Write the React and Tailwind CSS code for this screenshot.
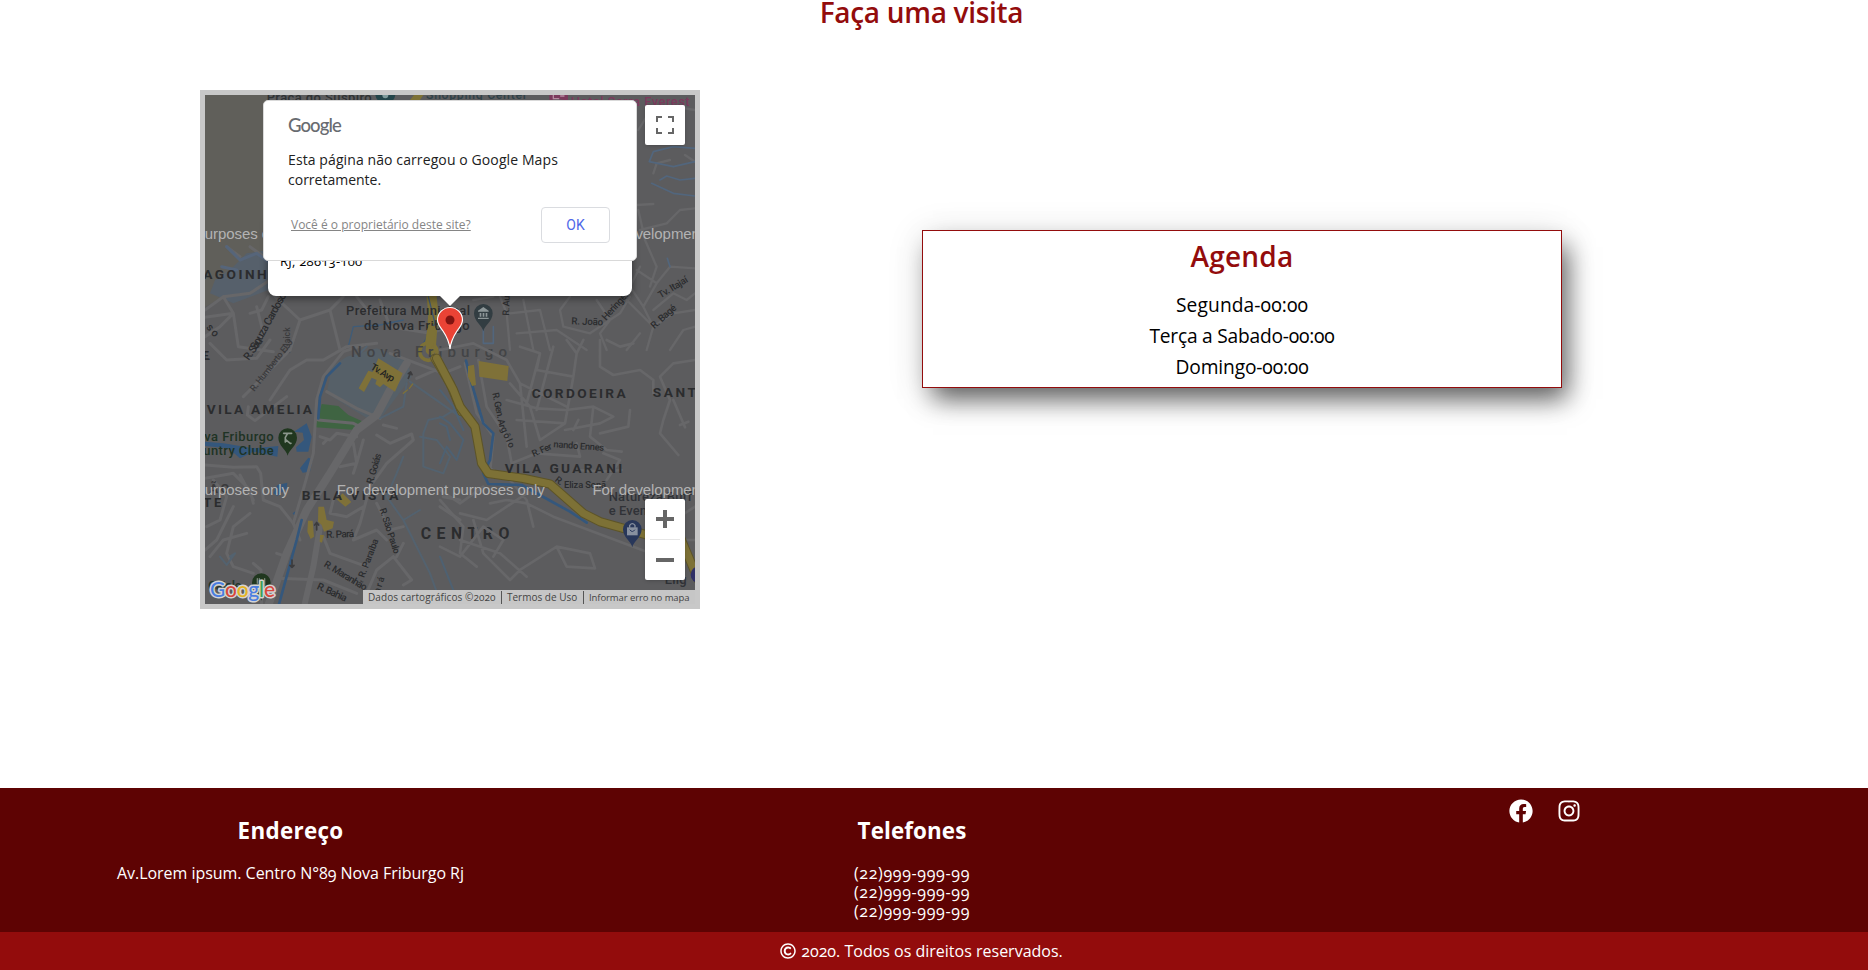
import { FaFacebook, FaInstagram, FaRegCopyright } from "react-icons/fa";

const Label = ({ x, y, w, size = 36, fill = "#2b2c2e", weight = 500, rot = 0, children }) => (
  <text
    x={x - 2}
    y={y - 1}
    textLength={w}
    fontSize={size * 1.08}
    fill={fill}
    fontWeight={weight}
    transform={rot ? `rotate(${rot} ${x} ${y})` : undefined}
  >
    {children}
  </text>
);

const Watermark = ({ x, y }) => (
  <text x={x} y={y} textLength="208" fontSize="15" fill="#b3b3b3" className="font-['Liberation_Sans',sans-serif]">
    For development purposes only
  </text>
);

const Pin = ({ x, y, fill }) => (
  <path
    transform={`translate(${x} ${y})`}
    d="M0 54C-4 36-28 24-28 0a28 28 0 0 1 56 0C28 24 4 36 0 54Z"
    fill={fill}
  />
);

function MapCanvas() {
  return (
    <svg viewBox="0 0 490 509" className="block h-[509px] w-[490px] font-['Roboto',sans-serif]">
      <rect width="490" height="509" fill="#5c5c5e" />

      {/* north-west */}
      <g transform="translate(-15 -15) scale(.33333)" fill="none" stroke="#676769" strokeWidth="9" strokeLinejoin="round" strokeLinecap="round">
        <path d="M45 45H235V500L190 560L120 640L45 680Z" fill="#605f5a" stroke="none" />
        <path d="M235 510L170 520L130 560L75 600L60 640L130 670L235 630Z" fill="#56606b" stroke="none" />
        <path d="M45 690L100 650L130 700L45 712M100 650L180 640L240 600M110 500L150 530M180 500L235 540M130 700L145 800L250 815M45 770L90 740L130 700M200 680L220 760L190 810M235 650L215 690L180 700" />
        <path d="M110 500L150 540L200 520L235 545M95 560L140 570" stroke="#56657a" />
        <path d="M255 650L330 720L420 690L460 650M330 720L300 810M420 690L450 810M570 660L600 740L720 760L810 730M500 650L540 700L590 690" />
        <path d="M725 650L730 700L722 810" stroke="#7d7136" strokeWidth="30" />
        <path d="M715 650L735 730L700 790" stroke="#3f566e" strokeWidth="4" />
        <path d="M475 800L490 740L570 735L640 720" stroke="#3f5c78" strokeWidth="4" />
        <g stroke="none">
          <Label x="232" y="68" w="315" size="36" fill="#2f3234">Praça do Suspiro</Label>
          <circle cx="586" cy="42" r="30" fill="#24454a" />
          <circle cx="586" cy="46" r="9" fill="#7e9a9b" />
          <path d="M660 60L672 45H700L690 60Z" fill="#7d7136" />
          <Label x="42" y="597" w="190" size="38" weight="700">AGOINH</Label>
          <Label x="200" y="810" w="190" size="30" rot="-61">Souza Cardoso</Label>
          <Label x="302" y="820" w="80" size="24" rot="-90" fill="#3a3a3c">t-Jaick</Label>
          <Label x="48" y="745" w="40" size="30" rot="50">so</Label>
          <Label x="470" y="707" w="372" size="36">Prefeitura Municipal</Label>
          <Label x="524" y="750" w="317" size="36">de Nova Friburgo</Label>
        </g>
      </g>

      {/* north-east */}
      <g transform="translate(235 -15) scale(.33333)" fill="none" stroke="#676769" strokeWidth="7" strokeLinejoin="round" strokeLinecap="round">
        <path d="M595 150L620 110L700 80L765 90M590 375L640 372M600 450L680 430L720 390L765 385M595 390L615 480L650 560L630 620M735 225L765 245M640 280L650 250L690 240M590 570L650 610L690 560L765 565M470 660L510 720L480 760L500 810M560 660L640 740L700 700L765 690M650 610L610 680L640 740L620 810M600 560L570 620L610 680M640 690L700 640L740 660L765 640M390 650L360 690L370 740L450 760L540 700L570 650M690 810L730 750L765 740M560 810L600 760M250 660L280 810M180 650L200 700L210 810M100 660L160 650M210 700L300 690L330 810M230 760L350 750L440 810" />
        <path d="M765 205L700 200L640 215L628 245L700 260L765 245M635 310L700 340L765 348M660 300L680 288L720 300L765 295M682 535L690 560M130 740V790H160V740" stroke="#52667d" strokeWidth="5" />
        <g stroke="none">
          <Label x="-40" y="57" w="303" size="34" fill="#2f4148">Shopping Center</Label>
          <path d="M328 45H384V66Q356 50 328 62Z" fill="#7b3a5c" />
          <path d="M340 45V56H356M362 48H372" stroke="#b58aa0" strokeWidth="4" />
          <Label x="394" y="80" w="357" size="36" fill="#7b3a5c">Hotel Serra Everest</Label>
          <Label x="208" y="705" w="60" size="26" rot="-88">R. Au</Label>
          <Label x="396" y="734" w="95" size="27" rot="2">R. João</Label>
          <Label x="500" y="722" w="105" size="27" rot="-48">Heringer</Label>
          <Label x="664" y="655" w="98" size="27" rot="-31">Tv. Itajaí</Label>
          <Label x="645" y="747" w="92" size="27" rot="-42">R. Bagé</Label>
          <Pin x="130" y="700" fill="#323d42" />
          <path d="M114 692L130 681L146 692V695H114ZM119 699H124V710H119ZM128 699H133V710H128ZM137 699H142V710H137ZM114 713H146V717H114Z" fill="#8d9698" />
        </g>
      </g>

      {/* south-west */}
      <g transform="translate(-15 245) scale(.33333)" fill="none" stroke="#676769" strokeWidth="9" strokeLinejoin="round" strokeLinecap="round">
        <path d="M425 80L470 50L560 25L650 60L665 110L575 230L540 240L410 160Z" fill="#566068" stroke="none" />
        <path d="M395 192L445 198L475 225L520 245L500 270L375 262Z" fill="#3f6442" stroke="none" />
        <path d="M45 305L100 310L150 318L190 325L265 318L262 350L190 335L150 355L115 325L45 318ZM312 275L350 250L365 290L355 335L320 335L318 322L342 300L338 278ZM330 385L355 353L368 358L360 395L338 398ZM250 460L262 435L292 428L290 445L262 468ZM308 520L318 512L314 528Z" fill="#34577c" stroke="none" />
        <path d="M60 10L110 60L200 55L240 0M160 170L300 30M240 180L300 90L350 60L400 60L470 20L560 10M175 200L172 225L195 242L250 200L290 170M45 375L130 382L200 380L212 400L220 480L270 500L310 550L330 600M45 415L130 400L180 450L190 490M150 405L190 480M70 420L110 470L90 540L50 560M130 500L80 600L45 630M180 520L130 560L110 640L130 680L190 700M60 650L100 600L170 580" />
        <path d="M520 15L460 35L400 110L380 180L370 340L345 430M410 155L500 205L570 235M385 240L490 250L510 260M390 290L420 300L440 280L500 290M345 430L310 550M400 310L410 300M490 310L500 370L450 380M560 285L600 310L665 282L670 300L590 370L540 440L510 550L490 600M520 300L500 370L490 400M430 480L420 520L470 530L520 500M400 590L420 640L530 680M260 715L400 720L500 760M215 800L213 690L190 670M260 640L290 650M560 490L600 570L640 560M490 600L560 570L590 600M610 650L665 720L640 735M610 650L560 690L530 760M620 650L640 610M600 40L760 100L810 80M680 115L760 80M750 500L810 540M760 470L810 480M580 255L620 265" />
        <path d="M650 70L600 150L560 225L500 270L420 400L350 510L290 640L230 810" strokeWidth="24" />
        <path d="M390 560L370 680L340 810" strokeWidth="18" />
        <path d="M450 70L410 110L390 170L385 235M335 540L320 600L265 800" stroke="#34577c" strokeWidth="8" />
        <path d="M650 130L640 200L570 235M660 125L810 230M700 280L715 240L760 230L810 200M690 290L740 300L780 350L760 400L700 380L700 280M640 350L620 400L590 470L640 540L720 700L760 810M690 510L640 540M500 50L530 20M90 650L110 675L135 640L120 650" stroke="#53626f" strokeWidth="6" />
        <path d="M565 55L638 100L628 125L615 155L580 132L570 142L556 132L560 120L545 113L522 156L506 145L535 92L548 96ZM440 478L458 460L484 486L466 500ZM385 500H402L410 540L432 545L428 565L402 575L395 555L384 545ZM354 542H368L372 590L362 597L352 575ZM390 585H402L396 608L389 605Z" fill="#7f7138" stroke="none" />
        <path d="M640 160L652 150M658 145L668 132" stroke="#7f7138" strokeWidth="4" />
        <circle cx="715" cy="35" r="26" stroke="#7d7136" strokeWidth="11" />
        <path d="M735 55L780 130L815 215" stroke="#5f562c" strokeWidth="28" />
        <path d="M735 55L780 130L815 215" stroke="#7d7136" strokeWidth="22" />
        <path d="M725 -30L718 10" stroke="#7d7136" strokeWidth="26" />
        <path d="M655 115L662 98M655 101L662 96L666 104M380 570V548M374 555L380 548L386 555M306 660V682M300 676L306 682L312 676" stroke="#3b3b3d" strokeWidth="5" />
        <g stroke="none">
          <Label x="485" y="53" w="468" size="42" fill="#434446">Nova Friburgo</Label>
          <Label x="541" y="88" w="78" size="27" rot="31" fill="#222">Tv. Avp</Label>
          <Label x="36" y="60" w="26" size="38" weight="700">EL</Label>
          <Label x="178" y="62" w="75" size="30" rot="-54">R. Sou</Label>
          <Label x="195" y="155" w="190" size="25" rot="-52" fill="#3a3a3c">R. Humberto El-J</Label>
          <Label x="52" y="224" w="316" size="38" weight="700">VILA AMELIA</Label>
          <Label x="45" y="304" w="208" size="36" fill="#1e3324">va Friburgo</Label>
          <Label x="42" y="346" w="211" size="36" fill="#1e3324">untry Clube</Label>
          <Pin x="293" y="293" fill="#20371f" />
          <path d="M281 280H305M293 280L286 292V306M286 298L298 308M300 310H303" fill="none" stroke="#8c978c" strokeWidth="5" />
          <Label x="60" y="460" w="60" size="36" weight="700" fill="#3a3a3c">ÃO</Label>
          <Label x="42" y="503" w="54" size="36" weight="700">TE</Label>
          <Label x="337" y="480" w="290" size="38" weight="700">BELA VISTA</Label>
          <Label x="550" y="432" w="94" size="27" rot="-74">R. Goiás</Label>
          <Label x="568" y="510" w="142" size="26" rot="72">R. São Paulo</Label>
          <Label x="411" y="595" w="84" size="28" rot="-2">R. Pará</Label>
          <Label x="524" y="713" w="122" size="26" rot="-69">R. Paraíba</Label>
          <Label x="401" y="680" w="145" size="27" rot="31">R. Maranhão</Label>
          <Label x="380" y="748" w="95" size="28" rot="24">R. Bahia</Label>
          <Label x="570" y="760" w="50" size="26" rot="-72">ará</Label>
          <Label x="694" y="597" w="266" size="44" weight="700">CENTRO</Label>
          <Label x="56" y="750" w="100" size="36" fill="#23352a">Cajole</Label>
          <Pin x="214" y="728" fill="#20371f" />
          <path d="M202 716V730M208 716V740M224 716V740" fill="none" stroke="#7c887e" strokeWidth="4" />
        </g>
      </g>

      {/* south-east */}
      <g transform="translate(235 245) scale(.33333)" fill="none" stroke="#676769" strokeWidth="8" strokeLinejoin="round" strokeLinecap="round">
        <path d="M0 30L100 10L200 60L240 130L380 200M75 70L110 220L160 290L150 400M115 60L140 200L200 290L215 370M240 20L300 40L290 90L400 110M300 40L260 190M340 20L290 210M380 0L410 40L400 110L375 250L300 300L270 200L210 130M410 40L430 0M200 180L290 205L375 210M230 240L375 250M240 130L260 320M480 0V80L520 105L600 90L640 120L640 160M500 0L540 20L580 10M765 60L700 70L660 110L690 180L670 240L660 280L715 345M700 180L735 262M720 255L745 245M380 210L460 200L520 230L480 250L375 270M460 200L450 290L500 330L545 335M570 210L565 260L480 280M400 270L415 240M215 370L290 340L420 350L410 310M410 390L490 395L545 390M490 340L540 360L500 420M150 385L210 420L260 480L280 560M150 490L200 480L260 490L340 530L420 560L620 635M0 450L60 490L130 440M0 480L70 560L60 640L110 680M60 520L140 540L260 460M100 540L130 640L210 720L240 690L350 620L450 640L465 685L380 680L350 620M0 620L60 650L130 560L190 600L160 650M60 600L180 640L260 710M620 600H765M640 580L765 500" />
        <path d="M0 230L30 250L70 300L50 360L20 320L0 370M0 150L40 200L70 270M0 250L20 260L30 300M0 650L20 700L40 750" stroke="#4e6172" strokeWidth="6" />
        <path d="M78 62L95 130L130 250L160 280L150 360L130 400L145 432L245 435L390 515L440 548" stroke="#34577c" strokeWidth="8" />
        <path d="M-10 55L40 150L60 200L105 260L125 370L145 400L250 415L330 432L430 520L480 545L640 590L720 590L775 720" stroke="#5d5428" strokeWidth="28" />
        <path d="M-10 55L40 150L60 200L105 260L125 370L145 400L250 415L330 432L430 520L480 545L640 590L720 590L775 720" stroke="#7d7136" strokeWidth="22" />
        <path d="M116 63L206 78L202 123L118 110ZM84 78L102 74L108 135L96 138L84 110Z" fill="#7f7138" stroke="none" />
        <g stroke="none">
          <Label x="277" y="174" w="282" size="38" weight="700">CORDOEIRA</Label>
          <Label x="640" y="171" w="130" size="38" weight="700">SANT</Label>
          <Label x="156" y="162" w="108" size="26" rot="78">R. Gen. Ar</Label>
          <Label x="181" y="268" w="66" size="26" rot="66">gôlo</Label>
          <Label x="283" y="351" w="62" size="26" rot="-24">R. Fer</Label>
          <Label x="342" y="323" w="152" size="26" rot="4">nando Ennes</Label>
          <Label x="196" y="399" w="353" size="38" weight="700">VILA GUARANI</Label>
          <Label x="344" y="424" w="24" size="26" rot="38">R.</Label>
          <Label x="374" y="446" w="126" size="26">Eliza Sonã</Label>
          <Label x="508" y="483" w="250" size="36" fill="#303237">Natureza Buff</Label>
          <Label x="508" y="525" w="128" size="36" fill="#303237">e Event</Label>
          <Pin x="577" y="568" fill="#28375a" />
          <path d="M561 562H593V586H561Z" fill="#87909f" />
          <path d="M570 570Q577 580 584 570" fill="none" stroke="#28375a" strokeWidth="3" />
          <path d="M569 562V556Q577 546 585 556V562" fill="none" stroke="#87909f" strokeWidth="4" />
          <circle cx="778" cy="704" r="26" fill="#2f2f66" />
          <Label x="676" y="734" w="66" size="36" fill="#303237">Elig</Label>
        </g>
      </g>

      <Watermark x="-124" y="143.5" />
      <Watermark x="387.5" y="143.5" />
      <Watermark x="-124" y="399.5" />
      <Watermark x="131.7" y="399.5" />
      <Watermark x="387.5" y="399.5" />

      <text x="5" y="502" textLength="65" fontSize="21" fontWeight="500" stroke="#d4d4d4" strokeWidth="3" strokeLinejoin="round" paintOrder="stroke" className="font-['Lato',sans-serif]">
        <tspan fill="#4a7de0">G</tspan>
        <tspan fill="#d8473b">o</tspan>
        <tspan fill="#e5b325">o</tspan>
        <tspan fill="#4a7de0">g</tspan>
        <tspan fill="#3fa157">l</tspan>
        <tspan fill="#d8473b">e</tspan>
      </text>
    </svg>
  );
}

function MapWidget() {
  return (
    <div className="relative h-[519px] w-[500px] shrink-0 overflow-hidden border-5 border-[#c8c8c8]">
      <MapCanvas />

      <div className="absolute top-[120px] left-[63px] h-[81px] w-[364px] rounded-lg bg-white px-3 pt-[38px] shadow-[0_2px_7px_1px_rgba(0,0,0,0.4)]">
        <p className="text-[13px] leading-4 tracking-[0.25px] text-black">RJ, 28613-100</p>
      </div>
      <svg viewBox="0 0 28 56" className="absolute top-[200px] left-[231px] h-[56px] w-[28px]">
        <path d="M4 1H24L14 11Z" fill="#fff" />
        <path
          d="M14 54C13.300 47 11 42 7 36C3 31 1.500 28.500 1.500 25A12.500 12.500 0 0 1 26.500 25C26.500 28.500 25 31 21 36C17 42 14.700 47 14 54Z"
          fill="#ea4335"
          stroke="#fff"
          strokeWidth="1.200"
        />
        <circle cx="14" cy="25" r="4.500" fill="#811411" />
      </svg>

      <div className="absolute top-[5px] left-[58px] flex h-[161px] w-[374px] flex-col rounded-[5px] border border-[#d9d9d9] bg-white pl-[25px]">
        <p className="mt-3 -ml-px h-6 font-['Lato',sans-serif] text-[18.5px] leading-6 font-medium tracking-[-0.9px] text-[#686b70]">Google</p>
        <p className="mt-[13px] -ml-px text-[14px] leading-5 text-[#212121]">
          <span className="tracking-[0.1px]">Esta página não carregou o Google Maps</span>
          <br />
          corretamente.
        </p>
        <div className="mt-[17px] flex items-center justify-between pr-[26px] pl-[2px]">
          <a className="text-[12px] text-[#858585] underline underline-offset-1">Você é o proprietário deste site?</a>
          <button className="h-9 w-[69px] rounded-[4px] border border-[#dadce0] font-['Roboto',sans-serif] text-[14px] text-[#4f68e8]">OK</button>
        </div>
      </div>

      <div className="absolute top-[10px] left-[440px] flex size-10 items-center justify-center rounded-[2px] bg-white shadow-[0_1px_4px_-1px_rgba(0,0,0,0.3)]">
        <svg viewBox="0 0 18 18" className="size-[18px]">
          <path d="M0 0V6H2V2H6V0ZM16 0H12V2H16V6H18V0ZM16 16H12V18H18V12H16ZM2 12H0V18H6V16H2Z" fill="#666" />
        </svg>
      </div>

      <div className="absolute top-[404px] left-[440px] flex h-[81px] w-10 flex-col items-center rounded-[2px] bg-white shadow-[0_1px_4px_-1px_rgba(0,0,0,0.3)]">
        <div className="flex h-10 items-center">
          <svg viewBox="0 0 18 18" className="size-[18px]">
            <path d="M7 0H11V7H18V11H11V18H7V11H0V7H7Z" fill="#666" />
          </svg>
        </div>
        <div className="h-px w-[30px] bg-[#e6e6e6]" />
        <div className="flex h-10 items-center">
          <div className="h-1 w-[18px] bg-[#666]" />
        </div>
      </div>

      <div className="absolute right-0 bottom-0 flex h-[14px] items-center bg-[#c6c6c6] text-[10px] leading-[13px] whitespace-nowrap text-[#444]">
        <span className="w-[138px] pl-[5px] tracking-[0.08px]">Dados cartográficos ©2020</span>
        <span className="w-[82px] border-l border-[#555] pl-[5px]">Termos de Uso</span>
        <span className="w-[112px] border-l border-[#555] pl-[5px] text-[9.5px] tracking-[-0.08px]">Informar erro no mapa</span>
      </div>
    </div>
  );
}

export default function App() {
  return (
    <div className="flex h-[970px] w-[1868px] flex-col overflow-hidden bg-white font-['Open_Sans',sans-serif] oldstyle-nums">
      <main className="flex-1">
        <h2 className="h-7 w-[1843px] text-center text-[28px] leading-6 font-semibold tracking-[-0.3px] text-[#930c0c]">Faça uma visita</h2>
        <div className="mt-[62px] flex items-start gap-[222px] pl-[200px]">
          <MapWidget />
          <section className="mt-[140px] h-[158px] w-[640px] border border-[#930c0c] bg-white pt-2 text-center shadow-[8px_14px_24px_-3px_rgba(0,0,0,0.6),0_5px_35px_rgba(0,0,0,0.12)]">
            <h2 className="text-[28px] leading-[34px] font-semibold tracking-[0.2px] text-[#930c0c]">Agenda</h2>
            <ul className="mt-4 text-[19.2px] leading-[31px] text-black">
              <li className="tracking-[0.1px]">Segunda-00:00</li>
              <li className="tracking-[-0.22px]">Terça a Sabado-00:00</li>
              <li className="tracking-[-0.15px]">Domingo-00:00</li>
            </ul>
          </section>
        </div>
      </main>

      <footer className="text-white">
        <div className="grid h-[144px] grid-cols-[581px_662px_1fr] bg-[#5e0303] text-center text-[16px] leading-[19px]">
          <div className="pt-[29px]">
            <h3 className="mb-[19px] text-[22.4px] leading-7 font-bold tracking-[0.3px]">Endereço</h3>
            <p className="tracking-[-0.04px]">Av.Lorem ipsum. Centro N°89 Nova Friburgo Rj</p>
          </div>
          <div className="pt-[29px]">
            <h3 className="mb-[19px] text-[22.4px] leading-7 font-bold tracking-[0.1px]">Telefones</h3>
            <ul className="tracking-[0.65px]">
              <li>(22)999-999-99</li>
              <li>(22)999-999-99</li>
              <li>(22)999-999-99</li>
            </ul>
          </div>
          <div className="flex gap-6 pt-[11px] pl-[265.5px]">
            <FaFacebook className="size-6" />
            <FaInstagram className="size-6" />
          </div>
        </div>
        <div className="flex h-[38px] w-full items-center bg-[#930c0c] pr-[25px]">
          <p className="flex w-full items-center justify-center gap-[5px] text-[16px]">
            <FaRegCopyright className="size-4" />
            2020. Todos os direitos reservados.
          </p>
        </div>
      </footer>
    </div>
  );
}
